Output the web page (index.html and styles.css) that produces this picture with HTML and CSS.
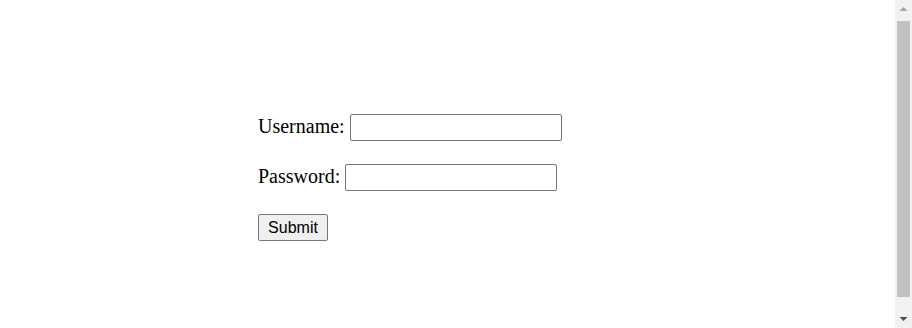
FILE: index.html
```html
<!DOCTYPE html>
<html lang="en">
<head>
    <meta charset="UTF-8">
    <title>Login</title>
    <link rel="stylesheet" href="styles.css">
</head>
<body>
    <div class="page">
        <form class="login-form">
            <p class="row">
                <label for="username">Username:</label>
                <input type="text" id="username" class="field">
            </p>
            <p class="row">
                <label for="password">Password:</label>
                <input type="password" id="password" class="field">
            </p>
            <p class="row">
                <button type="submit" class="btn-submit">Submit</button>
            </p>
        </form>
    </div>

    <!-- Barra de desplazamiento -->
    <div class="scrollbar">
        <div class="scroll-arrow">
            <svg width="17" height="17" viewBox="0 0 17 17"><path d="M4.5 11 L8.5 7 L12.5 11 Z" fill="#a3a3a3"/></svg>
        </div>
        <div class="scroll-track">
            <div class="scroll-thumb"></div>
        </div>
        <div class="scroll-arrow">
            <svg width="17" height="17" viewBox="0 0 17 17"><path d="M4.5 6 L8.5 10 L12.5 6 Z" fill="#505050"/></svg>
        </div>
    </div>
</body>
</html>
```

FILE: styles.css
```css
* {
    box-sizing: border-box;
}

body {
    margin: 0;
    height: 328px;
    display: flex;
    overflow: hidden;
    font-family: 'Liberation Serif', 'Times New Roman', serif;
    font-size: 20px;
    color: #000;
    background-color: #fff;
}

.page {
    flex-grow: 1;
    padding-top: 94px;
    padding-left: 258px;
}

.row {
    margin: 20px 0;
    min-height: 30px;
}

.field {
    width: 212px;
    height: 27px;
    margin: 0;
    border: 1px solid #767676;
    border-radius: 2px;
    font-size: 16px;
    padding: 1px 2px;
}

.btn-submit {
    width: 70px;
    height: 27px;
    font-family: 'Liberation Sans', Arial, sans-serif;
    font-size: 16px;
    background-color: #efefef;
    border: 1px solid #767676;
    border-radius: 2px;
    padding: 0;
    color: #000;
}

/* Barra de desplazamiento */
.scrollbar {
    width: 17px;
    display: flex;
    flex-direction: column;
    background-color: #f1f1f1;
}

.scroll-arrow {
    height: 17px;
}

.scroll-arrow svg {
    display: block;
}

.scroll-track {
    flex-grow: 1;
    padding: 4px 2px 14px;
}

.scroll-thumb {
    height: 100%;
    background-color: #c1c1c1;
}
```
